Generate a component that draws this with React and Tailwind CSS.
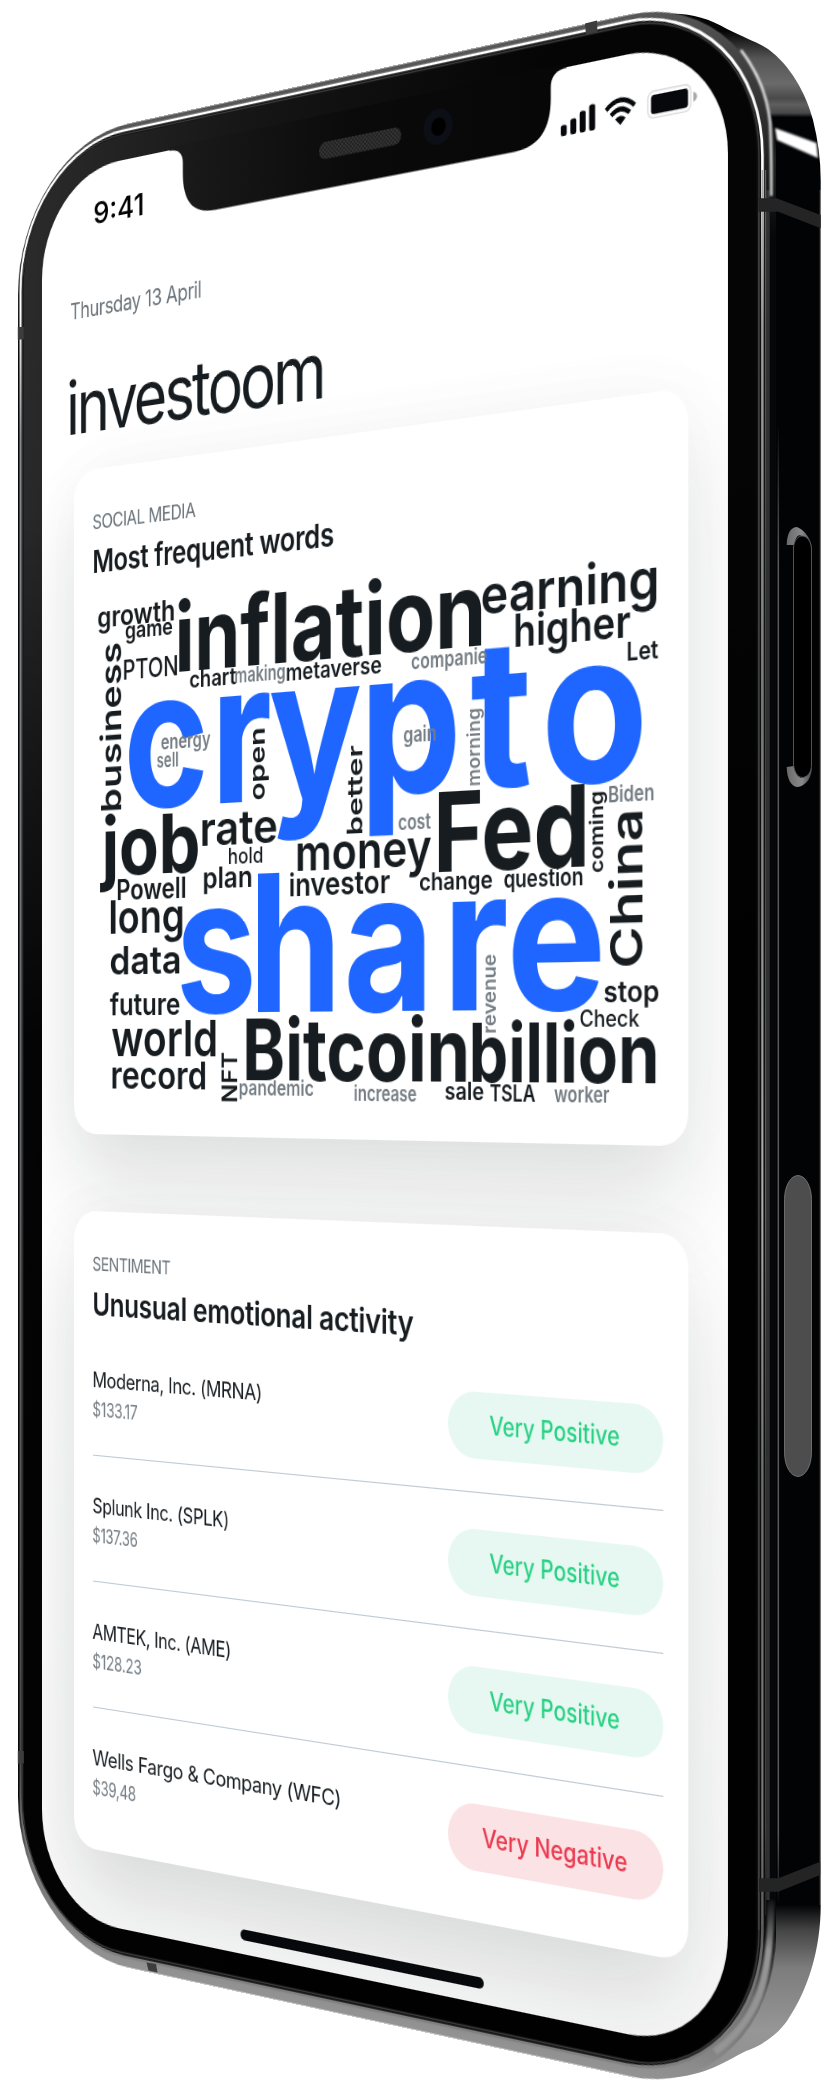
import React, { useLayoutEffect, useRef, useState } from "react";

const INK = "#161c20";
const BLUE = "#1e66ff";
const GRAY = "#747d84";

/* Screen plane <-> viewport. The plane is 780 x 1688 units. */
const G = 0.00018167;
const depth = (x) => 4155 / (x + 4113);
const toU = (x) => (1 - depth(x)) / G;
const toV = (x, y) => ((y - 1047) * depth(x) + 870) / 1.028;

/* Word grid: origin (50, 380), 2.376 columns and 3 rows per pixel. */
const gx = (x) => 50 + x / 2.37576;
const gy = (y) => 380 + y / 3;

// Headline words, letter by letter: left column and side bearing (em) of each.
const BIG = [
  {
    text: "crypto",
    left: 190,
    base: 1285,
    size: 181,
    letters: [[190, 0.045], [405, 0.065], [525, 0.015], [760, 0.065], [1005, 0.015], [1185, 0.045]],
  },
  {
    text: "share",
    left: 315,
    base: 1897,
    size: 176,
    letters: [[313, 0.04], [495, 0.065], [712, 0.04], [958, 0.065], [1102, 0.045]],
  },
];

// [text, left, right, baseline at the left, size, colour, weight]
const ACROSS = [
  ["inflation", 305, 1027, 877, 90, INK, 700],
  ["earning", 1028, 1443, 704, 48, INK, 600],
  ["higher", 1105, 1375, 800, 39, INK, 600],
  ["growth", 115, 295, 743, 27, INK, 600],
  ["game", 180, 290, 776, 22, INK, 600],
  ["PTON", 175, 303, 900, 26, INK, 500],
  ["Let", 1372, 1443, 841, 22, INK, 600],
  ["chart", 333, 440, 925, 21, INK, 600],
  ["making", 440, 558, 908, 19, GRAY, 600],
  ["metaverse", 562, 786, 904, 21, INK, 600],
  ["companie", 860, 1037, 867, 19.5, GRAY, 600],
  ["energy", 265, 380, 1110, 19, GRAY, 600],
  ["sell", 255, 304, 1162, 19, GRAY, 600],
  ["gain", 841, 917, 1087, 19, GRAY, 600],
  ["job", 130, 350, 1486, 77, INK, 700],
  ["rate", 360, 537, 1397, 43, INK, 600],
  ["hold", 424, 505, 1451, 20, INK, 500],
  ["Powell", 160, 322, 1559, 26.5, INK, 600],
  ["plan", 365, 479, 1527, 26.5, INK, 600],
  ["investor", 570, 805, 1549, 29, INK, 600],
  ["money", 587, 902, 1472, 46, INK, 600],
  ["cost", 829, 903, 1349, 18.5, GRAY, 600],
  ["Fed", 921, 1272, 1476, 97, INK, 700],
  ["Biden", 1328, 1434, 1269, 19, GRAY, 600],
  ["change", 879, 1050, 1533, 21.5, INK, 600],
  ["question", 1080, 1265, 1524, 21, INK, 600],
  ["long", 143, 316, 1662, 44, INK, 600],
  ["data", 145, 309, 1783, 37, INK, 600],
  ["future", 145, 307, 1907, 29.5, INK, 600],
  ["stop", 1318, 1445, 1868, 25, INK, 600],
  ["Check", 1260, 1398, 1939, 20, INK, 500],
  ["world", 150, 395, 2027, 47, INK, 600],
  ["record", 147, 370, 2124, 36, INK, 600],
  ["Bitcoin", 465, 990, 2100, 78, INK, 700],
  ["billion", 1003, 1440, 2106, 71, INK, 700],
  ["pandemic", 450, 625, 2145, 19, GRAY, 600],
  ["increase", 724, 869, 2161, 19, GRAY, 600],
  ["sale", 940, 1029, 2160, 21, INK, 600],
  ["TSLA", 1047, 1151, 2165, 20, INK, 600],
  ["worker", 1200, 1327, 2167, 18.5, GRAY, 600],
];

// [text, baseline column, top, bottom, size, colour, weight]
const UPRIGHT = [
  ["business", 170, 790, 1290, 36, INK, 600],
  ["open", 510, 1045, 1257, 25, INK, 600],
  ["better", 741, 1098, 1362, 24, INK, 600],
  ["morning", 1022, 985, 1215, 18.5, GRAY, 600],
  ["coming", 1314, 1235, 1475, 20, INK, 600],
  ["China", 1407, 1292, 1757, 45, INK, 600],
  ["revenue", 1059, 1725, 1958, 18.5, GRAY, 600],
  ["NFT", 445, 2020, 2165, 26, INK, 600],
];

function WordCloud() {
  return (
    <svg
      viewBox="42 400 699 530"
      className="block h-[530px] w-[699px] overflow-visible"
      fontFamily="Inter, sans-serif"
    >
      {BIG.map((w) => (
        <text
          key={w.text}
          x={w.letters.map(([x, b]) => (toU(gx(x)) - b * w.size).toFixed(1)).join(" ")}
          y={toV(gx(w.left), gy(w.base))}
          fontSize={w.size}
          fontWeight={700}
          fill={BLUE}
        >
          {w.text}
        </text>
      ))}
      {ACROSS.map(([t, x1, x2, y, s, c, wt]) => {
        const pad = s * 0.05;
        const u1 = toU(gx(x1)) - pad;
        const u2 = toU(gx(x2)) + pad;
        return (
          <text
            key={t}
            x={u1}
            y={toV(gx(x1), gy(y))}
            fontSize={s}
            fontWeight={wt}
            fill={c}
            textLength={u2 - u1}
            lengthAdjust="spacingAndGlyphs"
          >
            {t}
          </text>
        );
      })}
      {UPRIGHT.map(([t, x, top, bottom, s, c, wt]) => {
        const pad = s * 0.05;
        const v1 = toV(gx(x), gy(bottom)) + pad;
        const v2 = toV(gx(x), gy(top)) - pad;
        return (
          <text
            key={t}
            transform={`translate(${toU(gx(x))} ${v1}) rotate(-90)`}
            fontSize={s}
            fontWeight={wt}
            fill={c}
            textLength={v1 - v2}
            lengthAdjust="spacingAndGlyphs"
          >
            {t}
          </text>
        );
      })}
    </svg>
  );
}

/* One line of text condensed or widened to a set width. */
function Fit({ width, className = "", children }) {
  const ref = useRef(null);
  const [scale, setScale] = useState(1);
  useLayoutEffect(() => {
    setScale(width / ref.current.offsetWidth);
  }, [width]);
  return (
    <div className={className} style={{ width }}>
      <span
        ref={ref}
        className="inline-block origin-left whitespace-nowrap"
        style={{ transform: `scaleX(${scale})` }}
      >
        {children}
      </span>
    </div>
  );
}

const ROWS = [
  { name: "Moderna, Inc. (MRNA)", nw: 211, price: "$133.17", pw: 58, mood: "Very Positive" },
  { name: "Splunk Inc. (SPLK)", nw: 171, price: "$137.36", pw: 58, mood: "Very Positive" },
  { name: "AMTEK, Inc. (AME)", nw: 173, price: "$128.23", pw: 63, mood: "Very Positive" },
  { name: "Wells Fargo & Company (WFC)", nw: 303, price: "$39,48", pw: 55, mood: "Very Negative" },
];

function Row({ row, last }) {
  const bad = row.mood === "Very Negative";
  return (
    <div
      className={
        "flex h-[121.1px] items-start justify-between " +
        (last ? "" : "border-b-[1.3px] border-[#bdc8d1]")
      }
    >
      <div className="-ml-[1px] pt-[34px]">
        <Fit width={row.nw} className="h-[28px] text-[20px] leading-[28px] tracking-[-0.02em] text-[#161c20]">
          {row.name}
        </Fit>
        <Fit width={row.pw} className="mt-[1.5px] h-[28px] text-[19px] leading-[28px] tracking-[-0.02em] text-[#747d84]">
          {row.price}
        </Fit>
      </div>
      <div
        className={
          "mt-[32px] flex h-[59px] w-[226px] items-center justify-center rounded-full text-[23.5px] font-medium leading-[30px] " +
          (bad ? "bg-[#fbe2e5] text-[#ea3a4f]" : "bg-[#e7f8f2] text-[#27d183]")
        }
      >
        <Fit width={bad ? 153 : 137}>{row.mood}</Fit>
      </div>
    </div>
  );
}

function Heading({ label, lw, title, tw }) {
  return (
    <div className="pl-[23.500px] pt-[39.6px]">
      <Fit width={lw} className="h-[24px] text-[18px] leading-[24px] tracking-[-0.03em] text-[#68727a]">
        {label}
      </Fit>
      <Fit width={tw} className="mt-[5.6px] h-[40px] text-[30px] font-semibold leading-[40px] tracking-[-0.01em] text-[#161c20]">
        {title}
      </Fit>
    </div>
  );
}

function StatusIcons() {
  return (
    <svg viewBox="611 35 138 25" className="mt-[35px] h-[25px] w-[138px] overflow-visible">
      <g fill="#06080b">
        <rect x="611" y="49.5" width="6.2" height="9.5" rx="2" />
        <rect x="621" y="45.5" width="6.2" height="13.5" rx="2" />
        <rect x="630.7" y="40.5" width="6.2" height="18.5" rx="2" />
        <rect x="640.5" y="36.5" width="6.2" height="22.5" rx="2" />
        <path d="M672.6 59 L667.2 53.4 Q672.6 49 678 53.4 Z" />
      </g>
      <g fill="none" stroke="#06080b" strokeWidth="4">
        <path d="M658 44.2 Q672.6 31 687.2 44.2" />
        <path d="M663 49.6 Q672.6 41 682.2 49.6" />
      </g>
      <rect x="700.5" y="35.8" width="43" height="22.6" rx="6" fill="#fff" stroke="#dcdcdc" strokeWidth="1.4" />
      <rect x="703.7" y="39" width="37" height="16.2" rx="3" fill="#06080b" />
      <path d="M746 43 Q749.6 44.5 749.6 47.3 T746 51.6 Z" fill="#a9a9a9" />
    </svg>
  );
}

function Chassis() {
  return (
    <svg viewBox="0 0 780 1688" className="absolute left-0 top-0 h-[1688px] w-[780px] overflow-visible">
      <defs>
        <linearGradient id="frame" x1="0" y1="0" x2="0" y2="1">
          <stop offset="0" stopColor="#585858" />
          <stop offset="0.06" stopColor="#303030" />
          <stop offset="0.12" stopColor="#060708" />
          <stop offset="0.92" stopColor="#060708" />
          <stop offset="0.95" stopColor="#6c6c6c" />
          <stop offset="1" stopColor="#949494" />
        </linearGradient>
        <linearGradient id="shine" x1="0" y1="0" x2="0" y2="1">
          <stop offset="0" stopColor="#ffffff" />
          <stop offset="0.09" stopColor="#ffffff" />
          <stop offset="0.16" stopColor="#8a8d90" />
          <stop offset="0.5" stopColor="#6a6d70" />
          <stop offset="0.9" stopColor="#4a4a4a" />
          <stop offset="0.95" stopColor="#777777" />
          <stop offset="1" stopColor="#808080" />
        </linearGradient>
        <linearGradient id="glass" x1="0" y1="0.05" x2="0.7" y2="0.2">
          <stop offset="0" stopColor="#2b2b2b" />
          <stop offset="0.45" stopColor="#161616" />
          <stop offset="1" stopColor="#050505" />
        </linearGradient>
        <linearGradient id="fade" x1="0" y1="0" x2="0" y2="1">
          <stop offset="0.2" stopColor="#000" stopOpacity="0" />
          <stop offset="0.5" stopColor="#000" stopOpacity="0.9" />
        </linearGradient>
      </defs>
      <rect x="-32" y="-33.500" width="858" height="1757" rx="144" fill="url(#frame)" />
      <rect x="-28.6" y="-28" width="842" height="1742" rx="135" fill="#0a0a0a" stroke="url(#shine)" strokeWidth="2.6" />
      <rect x="-26" y="-24.500" width="836" height="1735" rx="130" fill="none" stroke="#3c3c3c" strokeWidth="1.4" />
      <rect x="-24.5" y="-23" width="832" height="1732" rx="127" fill="url(#glass)" />
      <rect x="-24.5" y="-23" width="832" height="1732" rx="127" fill="url(#fade)" />
    </svg>
  );
}

function Notch() {
  return (
    <svg viewBox="0 0 780 80" className="absolute left-0 top-0 h-[80px] w-[780px] overflow-visible">
      <defs>
        <linearGradient id="notch" x1="0" y1="0" x2="1" y2="0">
          <stop offset="0" stopColor="#1b1b1b" />
          <stop offset="0.5" stopColor="#0a0a0a" />
          <stop offset="1" stopColor="#070707" />
        </linearGradient>
        <pattern id="mesh" width="4" height="4" patternUnits="userSpaceOnUse">
          <rect width="4" height="4" fill="#222" />
          <circle cx="1" cy="1" r="0.9" fill="#3d3d3d" />
          <circle cx="3" cy="3" r="0.9" fill="#3d3d3d" />
        </pattern>
      </defs>
      <path
        d="M164 -3 V0.5 Q180.500 0.5 180.500 15 V24 C180.500 50 192 64.500 220 64.500 H561 C589 64.500 600.500 50 600.500 24 V15 Q600.500 0.5 617 0.5 V-3 Z"
        fill="url(#notch)"
      />
      <rect x="344" y="22" width="94" height="15.600" rx="7.800" fill="url(#mesh)" />
      <circle cx="479" cy="29" r="16" fill="#0d0f16" />
      <circle cx="479.500" cy="29" r="8" fill="#000" />
    </svg>
  );
}

function Side() {
  return (
    <svg viewBox="0 0 832 2093" className="absolute left-0 top-0 h-[2093px] w-[832px]">
      <defs>
        <linearGradient id="side" gradientUnits="userSpaceOnUse" x1="790" y1="0" x2="778" y2="2093">
          <stop offset="0.015" stopColor="#050505" />
          <stop offset="0.028" stopColor="#555" />
          <stop offset="0.04" stopColor="#6a6a6a" />
          <stop offset="0.047" stopColor="#4a4a4a" />
          <stop offset="0.05" stopColor="#5e5e5e" />
          <stop offset="0.054" stopColor="#484848" />
          <stop offset="0.056" stopColor="#020305" />
          <stop offset="0.91" stopColor="#020305" />
          <stop offset="0.922" stopColor="#444" />
          <stop offset="0.94" stopColor="#7c7c7c" />
          <stop offset="0.97" stopColor="#969696" />
          <stop offset="1" stopColor="#8c8c8c" />
        </linearGradient>
        <filter id="soft" x="-20%" y="-20%" width="140%" height="140%">
          <feGaussianBlur stdDeviation="1" />
        </filter>
      </defs>
      <path
        d="M640 20 C670 9 700 13 727 29 C745 38 757 42 768 49 C790 65 806 93 813 120 C818 140 820.700 160 820.700 180 V1905 C820.700 1950 808 1990 787 2021 C775 2037 762 2045 746 2051 C722 2063 704 2078 655 2078.500 Z"
        fill="url(#side)"
      />
      <path d="M775 128 L816.500 143 L818 158 L777 140 Z" fill="#fff" filter="url(#soft)" />
    </svg>
  );
}

function Trim() {
  return (
    <svg viewBox="0 0 832 2093" className="absolute left-0 top-0 h-[2093px] w-[832px]">
      <defs>
        <linearGradient id="rail" gradientUnits="userSpaceOnUse" x1="0" y1="60" x2="0" y2="1960">
          <stop offset="0" stopColor="#9a9a9a" />
          <stop offset="0.1" stopColor="#a8a8a8" />
          <stop offset="0.35" stopColor="#777" />
          <stop offset="0.6" stopColor="#b5b5b5" />
          <stop offset="0.75" stopColor="#707070" />
          <stop offset="0.93" stopColor="#7c7c7c" />
          <stop offset="1" stopColor="#7c7c7c" stopOpacity="0" />
        </linearGradient>
        <linearGradient id="edge" gradientUnits="userSpaceOnUse" x1="0" y1="420" x2="0" y2="1905">
          <stop offset="0" stopColor="#777" stopOpacity="0" />
          <stop offset="0.1" stopColor="#777" />
          <stop offset="0.95" stopColor="#777" />
          <stop offset="1" stopColor="#777" stopOpacity="0" />
        </linearGradient>
        <linearGradient id="cap" x1="0" y1="0" x2="1" y2="0">
          <stop offset="0" stopColor="#6a6a6a" />
          <stop offset="0.6" stopColor="#8a8a8a" />
          <stop offset="1" stopColor="#444" />
        </linearGradient>
        <linearGradient id="lower" gradientUnits="userSpaceOnUse" x1="0" y1="1895" x2="0" y2="1950">
          <stop offset="0" stopColor="#8a8a8a" stopOpacity="0" />
          <stop offset="1" stopColor="#949494" />
        </linearGradient>
        <filter id="glow" x="-30%" y="-5%" width="160%" height="110%">
          <feGaussianBlur stdDeviation="0.8" />
        </filter>
      </defs>
      <g fill="none">
        <path d="M768 190 V1900" stroke="#2f3132" strokeWidth="3.500" />
        <path d="M758.800 200 V1930" stroke="#454545" strokeWidth="1.200" />
        <path d="M762.300 170 V1925" stroke="url(#rail)" strokeWidth="1.300" />
        <path d="M765.700 170 V1915" stroke="url(#rail)" strokeWidth="0.900" opacity="0.700" />
        <path d="M778 420 h0.600 V1905 h-0.600 Z" stroke="url(#edge)" strokeWidth="0.700" />
        <path d="M820.300 190 V1905" stroke="#7d7d7d" strokeWidth="1" />
        <path d="M741 50 C756 70 767 92 770 122 C771.500 145 771.300 170 771.300 196" stroke="#fff" strokeWidth="2.200" filter="url(#glow)" />
        <path d="M771 1900 C771 1985 757 2020 715 2052" stroke="url(#lower)" strokeWidth="7" filter="url(#glow)" />
      </g>
      <g fill="#242424">
        <path d="M758.300 198.300 H776.700 L820.700 215 V228.300 L778.300 211.700 H758.300 Z" />
        <path d="M759 1878.300 H778.300 L820.200 1861.700 V1875 L778.300 1891.700 H759 Z" />
      </g>
      <g fill="#3d3d3d">
        <rect x="17.800" y="327" width="6" height="12.500" />
        <rect x="17.800" y="1751" width="6" height="12.500" />
        <path d="M585 23.500 L597 20.500 L597.500 31.500 L586 34.500 Z" />
        <path d="M146.500 1962.500 L156 1964 L157.500 1972.500 L148.500 1970.500 Z" />
      </g>
      <path d="M786.700 545 C787 533 791 527 797 527 C805 530 812 540 812 550 L808 545 C803 534 797 530 794 545 Z" fill="url(#cap)" />
      <path d="M786.700 767 C787 779 791 787 798 787 C806 786 812 777 812 767 L808 772 C803 781 797 780 794 766 Z" fill="url(#cap)" />
      <path d="M793.500 547 C796 530 811.500 534 811.500 550 V765 C811.500 779 796 784 793.500 765 Z" fill="#000" stroke="#5c5c5c" strokeWidth="0.900" />
      <rect x="784.500" y="1175.500" width="27" height="301" rx="13.500" ry="24" fill="#4d4d4d" stroke="#8a8a8a" strokeWidth="0.700" />
    </svg>
  );
}

const CARD =
  "relative ml-[42px] w-[699px] shrink-0 rounded-[28px] bg-white shadow-[0_48px_90px_rgba(20,24,24,0.12),0_4px_70px_rgba(20,24,24,0.03)]";

export default function App() {
  return (
    <div className="relative h-[2093px] w-[832px] overflow-hidden bg-white font-['Inter',sans-serif]">
      <Side />
      <div className="absolute left-0 top-0 h-[1688px] w-[780px] origin-top-left [transform:matrix3d(0.7472,-0.19021,0,-0.00018167,0,1.028,0,0,0,0,1,0,42,177,0,1)]">
        <Chassis />
        <main className="relative flex h-[1688px] w-[780px] flex-col overflow-hidden rounded-[100px] bg-gradient-to-b from-white via-white to-[#fafafa]">
          <header className="flex h-[123.4px] shrink-0 items-start justify-between pl-[67px] pr-[31px]">
            <Fit width={65} className="mt-[27.500px] text-[29px] font-medium leading-[36px] text-black">
              9:41
            </Fit>
            <StatusIcons />
          </header>
          <div className="shrink-0">
            <Fit width={166} className="ml-[36.500px] h-[28px] text-[21px] leading-[28px] tracking-[-0.02em] text-[#68727a]">
              Thursday 13 April
            </Fit>
            <Fit width={317} className="ml-[32px] mt-[38px] h-[80px] text-[71px] leading-[80px] tracking-[-0.05em] text-[#161c20]">
              investoom
            </Fit>
          </div>
          <section className={CARD + " mt-[21.9px] h-[638.6px]"}>
            <Heading label="SOCIAL MEDIA" lw={130} title="Most frequent words" tw={295} />
            <WordCloud />
          </section>
          <section className={CARD + " mt-[73.7px] h-[613px]"}>
            <Heading label="SENTIMENT" lw={99} title="Unusual emotional activity" tw={386} />
            <div className="mt-[4.800px] px-[25px]">
              {ROWS.map((row, i) => (
                <Row key={row.name} row={row} last={i === ROWS.length - 1} />
              ))}
            </div>
          </section>
          <div className="relative mx-auto mt-[48px] h-[10px] w-[278px] shrink-0 rounded-full bg-[#06080b]" />
        </main>
        <Notch />
      </div>
      <Trim />
    </div>
  );
}
